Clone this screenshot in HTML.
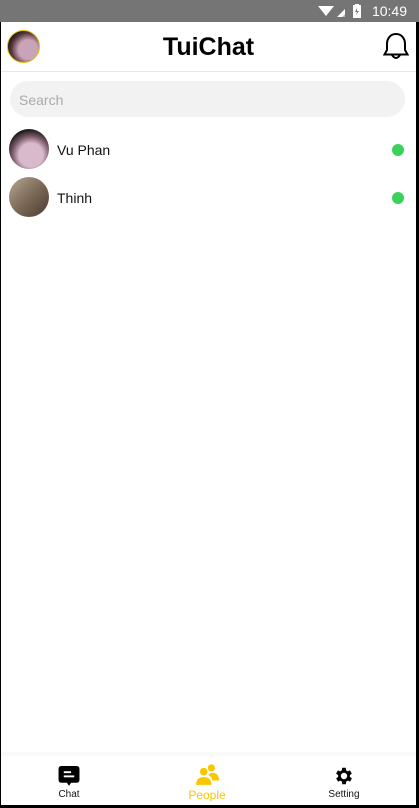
<!DOCTYPE html>
<html><head><meta charset="utf-8"><style>
*{margin:0;padding:0;box-sizing:border-box}
body{width:419px;height:808px;background:#000;font-family:"Liberation Sans",sans-serif;position:relative;overflow:hidden}
.screen{position:absolute;left:1px;top:0;width:415px;height:805px;background:#fff}
.status{position:absolute;left:0;top:0;width:419px;height:22px;background:#757575;color:#fff;font-size:14px;z-index:5}
.status .t{position:absolute;right:12px;top:3px}
.hdr{position:absolute;top:22px;left:0;width:415px;height:50px;border-bottom:1px solid #e8e8e8}
.title{position:absolute;left:0;right:0;top:11px;text-align:center;font-size:25px;font-weight:bold;color:#000}
.av{border-radius:50%;position:absolute}
.search{position:absolute;left:9px;top:81px;width:395px;height:36px;background:#f2f2f2;border-radius:18px;color:#aaa;font-size:14px;padding:11px 0 0 9px}
.row{position:absolute;left:0;width:415px;height:44px}
.row .n{position:absolute;left:56px;top:15px;font-size:14px;color:#111}
.dot{position:absolute;left:391px;top:17px;width:12px;height:12px;border-radius:50%;background:#3ad15a}
.tab{position:absolute;top:752px;left:0;width:415px;height:53px;background:#fff;border-top:4px solid #fafafa}
.tab .it{position:absolute;top:33px;font-size:10px;color:#111;text-align:center;width:80px}
</style></head><body>
<div class="screen">
<div class="hdr">
<div class="av" style="left:6px;top:8px;width:33px;height:33px;border:1.5px solid #f0c000;background:radial-gradient(circle at 65% 60%,#c9a3b8 0 35%,#5a3a40 60%,#111 80%)"></div>
<div class="title">TuiChat</div>
<svg style="position:absolute;left:382px;top:10px" width="26" height="30" viewBox="0 0 26 30"><path d="M13 2C7 2 4 7 4 12V18L1.5 22.5H24.5L22 18V12C22 7 19 2 13 2Z" fill="none" stroke="#000" stroke-width="2"/><path d="M9 23Q13 29 17 23" fill="none" stroke="#000" stroke-width="2"/></svg>
</div>
<div class="search">Search</div>
<div class="row" style="top:127px"><div class="av" style="left:8px;top:2px;width:40px;height:40px;background:radial-gradient(circle at 55% 65%,#d9b9cc 0 35%,#7a5868 55%,#1a1a1a 75%)"></div><div class="n">Vu Phan</div><div class="dot"></div></div>
<div class="row" style="top:175px"><div class="av" style="left:8px;top:2px;width:40px;height:40px;background:linear-gradient(135deg,#b8a894,#7d6a58 50%,#4a3c30)"></div><div class="n">Thinh</div><div class="dot"></div></div>
<div class="tab">
<svg style="position:absolute;left:57px;top:10px" width="22" height="22" viewBox="0 0 20 21"><path d="M3 0H17Q20 0 20 3V13Q20 16 17 16H12L10 19L8 16H3Q0 16 0 13V3Q0 0 3 0Z" fill="#000"/><rect x="5" y="5" width="7" height="1.8" fill="#fff"/><rect x="5" y="9" width="10" height="1.8" fill="#fff"/></svg>
<div class="it" style="left:28px">Chat</div>
<svg style="position:absolute;left:194px;top:8px" width="24" height="22" viewBox="0 0 22 20"><circle cx="8" cy="7" r="3.5" fill="#f9c600"/><circle cx="15" cy="3.5" r="3.3" fill="#f9c600"/><path d="M1 19Q1 12 8 12Q15 12 15 19Z" fill="#f9c600"/><path d="M12 10Q14 8 16 8Q22 8 22 15H16Q15 11 12 10Z" fill="#f9c600"/></svg>
<div class="it" style="left:166px;color:#f9c600;font-size:12px;top:32px">People</div>
<svg style="position:absolute;left:332px;top:9px" width="22" height="22" viewBox="0 0 24 24"><path fill="#000" d="M19.4 13a7.5 7.5 0 000-2l2.1-1.6-2-3.5-2.5 1a7 7 0 00-1.7-1L15 3h-4l-.4 2.9a7 7 0 00-1.7 1l-2.5-1-2 3.5L6.6 11a7.5 7.5 0 000 2l-2.1 1.6 2 3.5 2.5-1a7 7 0 001.7 1L11 21h4l.4-2.9a7 7 0 001.7-1l2.5 1 2-3.5zM13 15.5a3.5 3.5 0 110-7 3.5 3.5 0 010 7z" transform="translate(-1 0)"/></svg>
<div class="it" style="left:303px">Setting</div>
</div>
</div>
<div class="status"><svg style="position:absolute;left:318px;top:5px" width="40" height="13"><path d="M0 1 L16 1 L8 11Z" fill="#fff"/><path d="M19 12 L27 4 L27 12Z" fill="#fff"/><path d="M24 12L27 9V12Z" fill="#bbb"/></svg><svg style="position:absolute;left:353px;top:4px" width="8" height="14"><rect x="0" y="1" width="8" height="13" fill="#fff"/><rect x="2" y="0" width="4" height="2" fill="#fff"/><path d="M4 4L2 8H4L3 11L6 7H4Z" fill="#757575"/></svg><span class="t">10:49</span></div>
</body></html>
